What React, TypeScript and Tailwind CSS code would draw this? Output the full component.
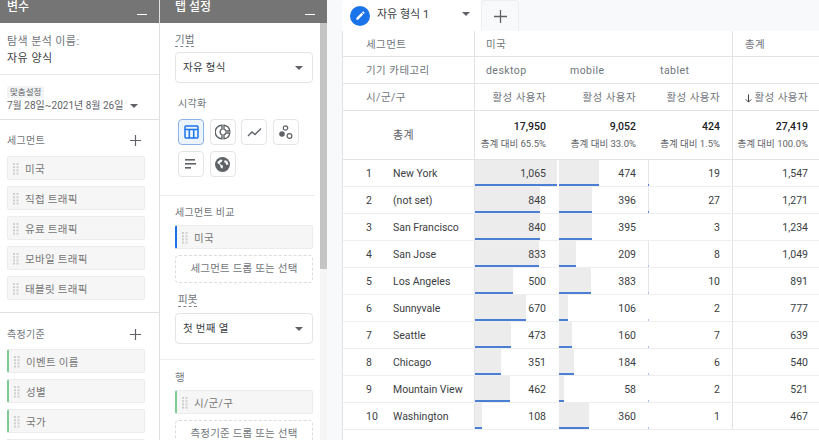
import React from "react";

const KO = "font-['Roboto','Noto_Sans_CJK_KR',sans-serif]";

function Grip() {
  return (
    <svg width="6" height="12" viewBox="0 0 6 12" className="shrink-0" fill="#cfcfcf">
      {[0, 1, 2, 3].map((r) =>
        [0, 1].map((c) => <rect key={`${r}${c}`} x={c * 3.5} y={r * 3.2} width="2" height="2" />)
      )}
    </svg>
  );
}

function Chip({ label, accent }: { label: string; accent?: string }) {
  return (
    <div className={`mb-[6px] flex h-[24px] w-[138px] shrink-0 items-center rounded-[2px] border border-[#ececec] bg-[#f6f6f6] pt-[2px] ${accent ?? ""}`}>
      <div className="ml-[5px] mr-[6px]"><Grip /></div>
      <span className="pt-[2px] text-[10.5px] tracking-[0.3px] text-[#757575]">{label}</span>
    </div>
  );
}

function PanelHeader({ title, pad }: { title: string; pad: string }) {
  return (
    <div className={`relative h-[23px] shrink-0 bg-[#757575] ${pad}`}>
      <span className="block text-[12px] font-medium leading-[14px] text-white">{title}</span>
      <div className="absolute bottom-[8px] right-[12px] h-[1.5px] w-[10px] bg-white" />
    </div>
  );
}

function Plus() {
  return (
    <svg width="13" height="13" viewBox="0 0 13 13" stroke="#5f6368" strokeWidth="1.2">
      <path d="M6.5 1v11M1 6.5h11" />
    </svg>
  );
}

function Caret({ className = "" }: { className?: string }) {
  return <div className={`h-0 w-0 border-x-[4px] border-t-[4px] border-x-transparent border-t-[#5f6368] ${className}`} />;
}

function Select({ label }: { label: string }) {
  return (
    <div className="flex h-[31px] w-[138px] items-center justify-between rounded-[4px] border border-[#e4e4e4] bg-white pl-[7px] pr-[9px]">
      <span className="text-[10.5px] tracking-[0.3px] text-[#3c4043]">{label}</span>
      <Caret />
    </div>
  );
}

function VizBtn({ children, active }: { children: React.ReactNode; active?: boolean }) {
  return (
    <div className={`flex h-[26px] w-[26px] items-center justify-center rounded-[4px] border ${active ? "border-[#8ab4e8] bg-[#eef4fe]" : "border-[#e4e4e4] bg-white"}`}>
      {children}
    </div>
  );
}

const rows: [number, string, number, number, number, number, number, number, number][] = [
  [1, "New York", 1065, 82, 474, 40, 19, 2, 1547],
  [2, "(not set)", 848, 65, 396, 33, 27, 2, 1271],
  [3, "San Francisco", 840, 65, 395, 33, 3, -1, 1234],
  [4, "San Jose", 833, 64, 209, 17, 8, 1, 1049],
  [5, "Los Angeles", 500, 38, 383, 32, 10, 1, 891],
  [6, "Sunnyvale", 670, 51, 106, 9, 2, 0, 777],
  [7, "Seattle", 473, 36, 160, 13, 7, 0, 639],
  [8, "Chicago", 351, 26, 184, 15, 6, 0, 540],
  [9, "Mountain View", 462, 35, 58, 5, 2, 0, 521],
  [10, "Washington", 108, 7, 360, 30, 1, 0, 467],
];

const fmt = (n: number) => n.toLocaleString("en-US");

function BarCell({ value, w, cls }: { value: number; w: number; cls: string }) {
  return (
    <div className={`relative flex h-full items-center justify-end pr-[13px] pt-[2px] ${cls}`}>
      <div className="absolute bottom-0 left-0 top-0 border-b-2 border-[#4a7fd4] bg-[#ececec]" style={{ width: w }} />
      <span className="relative text-[10.5px] text-[#3c4043]">{fmt(value)}</span>
    </div>
  );
}

function TabletTick({ kind }: { kind: number }) {
  if (kind < 0) return null;
  return (
    <div className="absolute -left-px bottom-0 flex w-px flex-col justify-end" style={{ height: kind > 0 ? 26 : 3 }}>
      {kind > 0 && <div className="w-px flex-1 bg-[#e6e6e6]" />}
      <div className={kind === 2 ? "h-[2px] w-px bg-[#4a7fd4]" : "h-[2px] w-px bg-[#a9c1e8]"} />
    </div>
  );
}

function HeadRow({ children, h = "h-[27px]" }: { children: React.ReactNode; h?: string }) {
  return <div className={`flex ${h} items-center border-b border-[#e3e3e3] text-[10.5px] tracking-[0.45px] text-[#70757a]`}>{children}</div>;
}

function LabelCell({ children }: { children: React.ReactNode }) {
  return <div className="flex h-full w-[132px] items-center border-r border-[#e3e3e3] pl-[23px] pt-[2px]">{children}</div>;
}

function TotalCell({ v, p, cls }: { v: string; p: string; cls: string }) {
  return (
    <div className={`flex h-full flex-col items-end justify-center ${cls}`}>
      <span className="text-[10.5px] font-medium leading-[14px] text-[#202124]">{v}</span>
      <span className="mt-[4px] whitespace-nowrap text-[9.5px] leading-[12px] text-[#5f6368]">{p}</span>
    </div>
  );
}

export default function App() {
  return (
    <div className={`flex h-[440px] w-[819px] overflow-hidden bg-[#f8f9fa] ${KO}`}>
      {/* Variables */}
      <div className="flex h-[440px] w-[160px] shrink-0 flex-col overflow-hidden border-r border-[#e0e0e0] bg-white">
        <PanelHeader title="변수" pad="pl-[7px]" />
        <div className="h-[52px] shrink-0 border-b border-[#e8e8e8] pl-[7px] pt-[10px]">
          <div className="text-[11px] leading-[17px] tracking-[0.4px] text-[#70757a]">탐색 분석 이름:</div>
          <div className="text-[11px] leading-[17px] tracking-[0.5px] text-[#3c4043]">자유 양식</div>
        </div>
        <div className="h-[45px] shrink-0 border-b border-[#e0e0e0] pl-[7px] pt-[11px]">
          <div className="block w-fit rounded-[2px] bg-[#f1f3f4] px-[3px] text-[8.5px] leading-[12px] text-[#5f6368]">맞춤설정</div>
          <div className="mt-[1px] flex items-center text-[10px] leading-[13px] text-[#5f6368]">
            <span>7월 28일~2021년 8월 26일</span>
            <Caret className="ml-[7px] border-x-[3px]" />
          </div>
        </div>
        <div className="h-[193px] shrink-0 border-b border-[#e0e0e0] pl-[7px] pt-[13px]">
          <div className="mb-[9px] flex h-[14px] items-center justify-between pr-[17px]">
            <span className="text-[10px] tracking-[0.3px] text-[#70757a]">세그먼트</span>
            <Plus />
          </div>
          {["미국", "직접 트래픽", "유료 트래픽", "모바일 트래픽", "태블릿 트래픽"].map((s) => <Chip key={s} label={s} />)}
        </div>
        <div className="shrink-0 pl-[7px] pt-[14px]">
          <div className="mb-[8px] flex h-[14px] items-center justify-between pr-[17px]">
            <span className="text-[10px] tracking-[0.3px] text-[#70757a]">측정기준</span>
            <Plus />
          </div>
          {["이벤트 이름", "성별", "국가", ""].map((s, i) => <Chip key={i} label={s} accent="border-l-2 border-l-[#81c995]" />)}
        </div>
      </div>

      {/* Tab settings */}
      <div className="flex w-[167px] shrink-0 flex-col">
        <PanelHeader title="탭 설정" pad="pl-[15px]" />
        <div className="relative flex-1 overflow-hidden bg-white">
          <div className="absolute bottom-0 right-0 top-0 w-[7px] bg-[#f5f5f5]">
            <div className="h-[246px] w-full bg-[#c4c4c4]" />
          </div>
          <div className="h-[173px] w-[155px] border-b border-[#eeeeee] pl-[15px] pt-[11px]">
            <div className="mb-[5px] w-fit border-b border-dashed border-[#80868b] text-[10.5px] leading-[12px] text-[#70757a]">기법</div>
            <Select label="자유 형식" />
            <div className="mb-[8px] ml-[3px] mt-[14px] text-[10px] leading-[14px] tracking-[0.3px] text-[#70757a]">시각화</div>
            <div className="ml-[3px] flex w-[130px] flex-wrap gap-x-[5.7px] gap-y-[6px]">
              <VizBtn active>
                <svg width="15" height="14" viewBox="0 0 15 14" fill="none" stroke="#1a73e8" strokeWidth="1.5"><rect x="1" y="1" width="13" height="12" rx="1" /><path d="M1 4.5h13M5.3 4.5V13M9.7 4.5V13" /></svg>
              </VizBtn>
              <VizBtn>
                <svg width="16" height="16" viewBox="0 0 16 16" fill="none" stroke="#5f6368" strokeWidth="1.4"><path d="M7 1.2A6.8 6.8 0 0 0 7 14.8V10.8A3 3 0 0 1 7 5.2Z" /><path d="M9 1.2A6.8 6.8 0 0 1 14.8 7H10.9A3 3 0 0 0 9 5.2Z" /><path d="M9 14.8A6.8 6.8 0 0 0 14.8 9H10.9A3 3 0 0 1 9 10.8Z" /></svg>
              </VizBtn>
              <VizBtn>
                <svg width="15" height="10" viewBox="0 0 15 10" fill="none" stroke="#5f6368" strokeWidth="1.4"><path d="M1 9l4-4 3 2.5L14 1.5" /></svg>
              </VizBtn>
              <VizBtn>
                <svg width="14" height="15" viewBox="0 0 14 15"><circle cx="6.5" cy="3" r="2.2" fill="none" stroke="#5f6368" strokeWidth="1.2" /><circle cx="3" cy="9" r="2.8" fill="#5f6368" /><circle cx="10.5" cy="11" r="2.4" fill="none" stroke="#5f6368" strokeWidth="1.2" /></svg>
              </VizBtn>
              <VizBtn>
                <svg width="12" height="10" viewBox="0 0 12 10" fill="#5f6368"><rect x="0" y="0" width="10" height="1.6" /><rect x="0" y="4" width="11" height="1.6" /><rect x="0" y="8" width="6" height="1.6" /></svg>
              </VizBtn>
              <VizBtn>
                <svg width="15" height="15" viewBox="0 0 15 15"><circle cx="7.5" cy="7.5" r="7.5" fill="#5f6368" /><path d="M2.5 5l3-2.5 2 .5-1 2-2 1 1.5 2 2 .5-.5 3-1.5-.5-1-3-2.5-2zM10 3l2.5 1.5 1 3-2 .5-1-2-1.5-1z" fill="#fff" /></svg>
              </VizBtn>
            </div>
          </div>
          <div className="w-[155px] pl-[15px] pt-[10px]">
            <div className="mb-[5px] text-[10px] leading-[14px] tracking-[0.3px] text-[#70757a]">세그먼트 비교</div>
            <Chip label="미국" accent="border-l-2 border-l-[#1a73e8]" />
            <div className="flex h-[28px] w-[138px] items-center justify-center rounded-[4px] border border-dashed border-[#dadce0] text-[10.5px] tracking-[0.2px] text-[#70757a]">세그먼트 드롭 또는 선택</div>
            <div className="mb-[6px] ml-[3px] mt-[11px] w-fit border-b border-dashed border-[#80868b] text-[10.5px] leading-[12px] text-[#70757a]">피봇</div>
            <Select label="첫 번째 열" />
          </div>
          <div className="mt-[15px] w-[155px] border-t border-[#eeeeee] pl-[15px] pt-[11px]">
            <div className="mb-[5px] text-[10.5px] leading-[14px] text-[#70757a]">행</div>
            <Chip label="시/군/구" accent="border-l-2 border-l-[#81c995]" />
            <div className="flex h-[28px] w-[138px] items-center justify-center rounded-[4px] border border-dashed border-[#dadce0] text-[10.5px] tracking-[0.2px] text-[#70757a]">측정기준 드롭 또는 선택</div>
          </div>
        </div>
      </div>

      {/* Report */}
      <div className="ml-[15px] flex min-w-0 flex-1 flex-col">
        <div className="flex h-[31px] shrink-0 items-start">
          <div className="flex h-[31px] w-[139px] items-center rounded-t-[4px] bg-white pl-[8px]">
            <div className="flex h-[20px] w-[20px] items-center justify-center rounded-full bg-[#1a73e8]">
              <svg width="11" height="11" viewBox="0 0 24 24" fill="#fff"><path d="M3 17.25V21h3.75L17.81 9.94l-3.75-3.75L3 17.25zM20.71 7.04a1 1 0 0 0 0-1.41l-2.34-2.34a1 1 0 0 0-1.41 0l-1.83 1.83 3.75 3.75 1.83-1.83z" /></svg>
            </div>
            <span className="ml-[7px] w-[51px] whitespace-nowrap text-[11px] text-[#3c4043]">자유 형식 1</span>
            <Caret className="ml-[34px] -mt-[3px] border-t-[#3c4043]" />
          </div>
          <div className="flex h-[31px] w-[38px] items-center justify-center rounded-t-[4px] border border-b-0 border-[#eeeeee] bg-[#f8f9fa]">
            <svg width="13" height="13" viewBox="0 0 13 13" stroke="#5f6368" strokeWidth="1.3"><path d="M6.5 0v13M0 6.5h13" /></svg>
          </div>
        </div>
        <div className="flex-1 border-l border-[#e3e3e3] bg-white">
          <HeadRow h="h-[26px]">
            <LabelCell>세그먼트</LabelCell>
            <div className="flex h-full w-[258px] items-center border-r border-[#e3e3e3] pl-[11px] pt-[2px]">미국</div>
            <div className="pl-[12px] pt-[2px]">총계</div>
          </HeadRow>
          <HeadRow>
            <LabelCell>기기 카테고리</LabelCell>
            <div className="w-[84px] pl-[11px] pt-[2px]">desktop</div>
            <div className="w-[90px] pl-[11px] pt-[2px]">mobile</div>
            <div className="flex h-full w-[84px] items-center border-r border-[#e3e3e3] pl-[11px] pt-[2px]">tablet</div>
          </HeadRow>
          <HeadRow>
            <LabelCell>시/군/구</LabelCell>
            <div className="w-[84px] pr-[13px] pt-[2px] text-right">활성 사용자</div>
            <div className="w-[90px] pr-[13px] pt-[2px] text-right">활성 사용자</div>
            <div className="flex h-full w-[84px] items-center justify-end border-r border-[#e3e3e3] pr-[12px] pt-[2px]">활성 사용자</div>
            <div className="flex w-[86px] items-center justify-end whitespace-nowrap pr-[11px] pt-[2px]">
              <svg width="7" height="9" viewBox="0 0 7 9" fill="none" stroke="#3c4043" strokeWidth="1" className="mr-[2px] shrink-0"><path d="M3.5 0.5v7.5M0.8 5.4l2.7 2.7 2.7-2.7" /></svg>
              활성 사용자
            </div>
          </HeadRow>
          <div className="flex h-[49px] items-center border-b border-[#e3e3e3]">
            <div className="flex h-full w-[132px] items-center border-r border-[#e3e3e3] pl-[50px] pt-[2px] text-[11px] tracking-[0.5px] text-[#5f6368]">총계</div>
            <TotalCell v="17,950" p="총계 대비 65.5%" cls="w-[84px] pr-[13px]" />
            <TotalCell v="9,052" p="총계 대비 33.0%" cls="w-[90px] pr-[13px]" />
            <TotalCell v="424" p="총계 대비 1.5%" cls="w-[84px] border-r border-[#e3e3e3] pr-[12px]" />
            <TotalCell v="27,419" p="총계 대비 100.0%" cls="w-[86px] pr-[11px]" />
          </div>
          {rows.map(([n, city, d, dw, m, mw, t, tk, total]) => (
            <div key={n} className="flex h-[27px] items-center border-b border-[#eeeeee] text-[10.5px] text-[#3c4043]">
              <div className="w-[50px] pl-[23px] pt-[2px]">{n}</div>
              <div className="flex h-full w-[82px] items-center whitespace-nowrap border-r border-[#e3e3e3] pt-[1px]">{city}</div>
              <BarCell value={d} w={dw} cls="w-[84px]" />
              <BarCell value={m} w={mw} cls="w-[90px]" />
              <div className="relative flex h-full w-[84px] items-center justify-end border-r border-[#e3e3e3] pr-[12px] pt-[2px]">
                <TabletTick kind={tk} />
                {t}
              </div>
              <div className="w-[86px] pr-[11px] pt-[2px] text-right">{fmt(total)}</div>
            </div>
          ))}
        </div>
      </div>
    </div>
  );
}
